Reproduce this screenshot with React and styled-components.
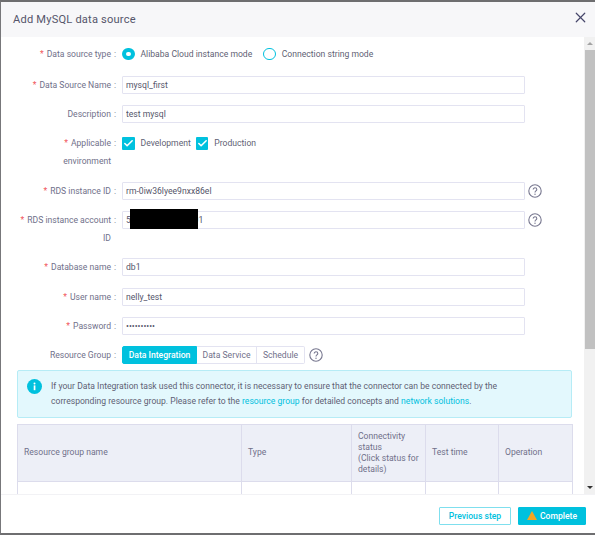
import React from "react";
import styled, { createGlobalStyle } from "styled-components";
import { Check, X } from "lucide-react";

const GlobalStyle = createGlobalStyle`
  html, body {
    margin: 0;
    padding: 0;
    background: #fff;
  }
  * {
    box-sizing: border-box;
  }
`;

const Dialog = styled.div`
  width: 595px;
  height: 535px;
  display: flex;
  flex-direction: column;
  overflow: hidden;
  background: #fff;
  border-top: 2px solid #6e6e70;
  border-bottom: 2px solid #6e6e70;
  border-left: 1px solid #77777a;
  font-family: Roboto, "Liberation Sans", sans-serif;
  font-size: 8.6px;
  color: #5f5f74;
`;

const Header = styled.header`
  height: 35px;
  flex: none;
  display: flex;
  align-items: center;
  justify-content: space-between;
  padding: 0 6px 0 12px;
  background: #f7f7f9;
`;

const Title = styled.h2`
  margin: 0;
  font-size: 11.1px;
  font-weight: 400;
  letter-spacing: 0.2px;
  color: #55556a;
`;

const CloseButton = styled.button`
  display: flex;
  padding: 0;
  border: 0;
  background: none;
  color: #46466a;
  margin-top: -4px;
`;

const Middle = styled.div`
  flex: 1;
  min-height: 0;
  display: flex;
`;

const Content = styled.div`
  flex: 1;
  min-width: 0;
  overflow: hidden;
  padding: 8px 12px 0 16px;
`;

const Scrollbar = styled.div`
  width: 11px;
  flex: none;
  display: flex;
  flex-direction: column;
  align-items: center;
  background: #f1f1f1;
`;

const ScrollArrow = styled.span`
  height: 13px;
  flex: none;
  display: flex;
  align-items: center;
  justify-content: center;
  &::before {
    content: "";
    border-left: 3px solid transparent;
    border-right: 3px solid transparent;
    ${(p) => (p.$down ? "border-top: 3px solid #333;" : "border-bottom: 3px solid #a3a3a3;")}
  }
`;

const ScrollTrack = styled.div`
  flex: 1;
  width: 100%;
`;

const ScrollThumb = styled.div`
  width: 10px;
  height: 299px;
  background: #c1c1c1;
`;

const Form = styled.div`
  display: flex;
  flex-direction: column;
  gap: 11.33px;
`;

const Row = styled.div`
  display: flex;
  align-items: flex-start;
  line-height: 18px;
  margin-bottom: ${(p) => (p.$spaced ? 1.5 : 0)}px;
`;

const Label = styled.div`
  width: 100px;
  flex: none;
  display: flex;
  justify-content: flex-end;
  text-align: right;
  color: #70708a;
`;

const LabelText = styled.span`
  width: 92px;
`;

const Colon = styled.span`
  width: 6px;
  flex: none;
  padding-left: 3px;
  text-align: left;
`;

const Star = styled.span`
  color: #f1575c;
  margin-right: 3px;
`;

const Control = styled.div`
  position: relative;
  margin-left: 5px;
  width: 403px;
  flex: none;
  display: flex;
  align-items: center;
  height: 18px;
`;

const Input = styled.input`
  width: 100%;
  height: 100%;
  padding: 0 3px;
  border: 1px solid #e3e3f1;
  border-radius: 1px;
  background: #fff;
  outline: none;
  font: inherit;
  color: #55556a;
`;

const Redaction = styled.div`
  position: absolute;
  left: 8px;
  top: -2px;
  width: 68px;
  height: 20px;
  background: #000;
`;

const Radio = styled.span`
  width: 12.5px;
  height: 12.5px;
  flex: none;
  border-radius: 50%;
  border: ${(p) => (p.$checked ? "4px solid #00c1de" : "1px solid #00c1de")};
  background: #fff;
`;

const Option = styled.span`
  margin-left: 6px;
  margin-right: ${(p) => p.$gap || 0}px;
  white-space: nowrap;
`;

const Checkbox = styled.span`
  width: 12.5px;
  height: 12.5px;
  flex: none;
  display: flex;
  align-items: center;
  justify-content: center;
  border-radius: 1px;
  background: #00c1de;
  color: #fff;
`;

const Tabs = styled.div`
  display: flex;
  height: 18px;
`;

const Tab = styled.span`
  width: ${(p) => p.$width}px;
  display: flex;
  align-items: center;
  justify-content: center;
  border: 1px solid #e3e3f1;
  border-left-width: ${(p) => (p.$first ? 1 : 0)}px;
  border-radius: ${(p) => (p.$first ? "2px 0 0 2px" : p.$last ? "0 2px 2px 0" : "0")};
  background: ${(p) => (p.$active ? "#00c1de" : "#fff")};
  border-color: ${(p) => (p.$active ? "#00c1de" : "#e3e3f1")};
  color: ${(p) => (p.$active ? "#fff" : "#70708a")};
  font-weight: ${(p) => (p.$active ? 500 : 400)};
`;

const HelpIcon = styled.svg`
  position: absolute;
  left: ${(p) => p.$left}px;
  top: 2px;
  width: 14px;
  height: 14px;
`;

const Alert = styled.div`
  display: flex;
  height: 48px;
  margin-top: 5.5px;
  padding: 8px 50px 0 9px;
  background: #e3f8fd;
  border: 1px solid #b6ecf6;
  border-radius: 2px;
  line-height: 15px;
  color: #5f5f74;
`;

const InfoIcon = styled.svg`
  width: 15px;
  height: 15px;
  flex: none;
  margin-right: 9px;
`;

const AlertLink = styled.a`
  color: #00c1de;
`;

const Table = styled.table`
  width: 555px;
  margin-top: 6px;
  border-collapse: collapse;
  table-layout: fixed;
  color: #70708a;
`;

const Th = styled.th`
  width: ${(p) => p.$width}px;
  height: 57px;
  padding: 0 6px;
  background: #edeff7;
  border: 1px solid #dcdcec;
  font-weight: 400;
  text-align: left;
  line-height: 11px;
`;

const Td = styled.td`
  height: 30px;
  border: 1px solid #dcdcec;
`;

const Footer = styled.footer`
  height: 39px;
  flex: none;
  display: flex;
  justify-content: flex-end;
  align-items: center;
  gap: 7px;
  padding: 3px 9px 0 0;
  border-top: 1px solid #f2f2f5;
`;

const Button = styled.button`
  height: 18px;
  width: ${(p) => p.$width}px;
  display: flex;
  align-items: center;
  justify-content: center;
  gap: 3px;
  padding: 0;
  border: 1px solid ${(p) => (p.$primary ? "#00c1de" : "#7fdfee")};
  border-radius: 1px;
  background: ${(p) => (p.$primary ? "#00c1de" : "#fff")};
  color: ${(p) => (p.$primary ? "#fff" : "#00c1de")};
  font: inherit;
  font-weight: 500;
`;

const Help = ({ left }) => (
  <HelpIcon $left={left} viewBox="0 0 14 14" fill="none">
    <circle cx="7" cy="7" r="6.2" stroke="#77778f" strokeWidth="1.1" />
    <path
      d="M5.2 5.6c0-1.1.8-1.8 1.8-1.8s1.8.7 1.8 1.7c0 1.4-1.8 1.5-1.8 3"
      stroke="#77778f"
      strokeWidth="1.1"
    />
    <circle cx="7" cy="10.3" r=".7" fill="#77778f" />
  </HelpIcon>
);

const FormRow = ({ label, required, spaced, children }) => (
  <Row $spaced={spaced}>
    <Label>
      <LabelText>
        {required && <Star>*</Star>}
        {label}
      </LabelText>
      <Colon>:</Colon>
    </Label>
    <Control>{children}</Control>
  </Row>
);

const columns = [
  { key: "name", title: "Resource group name", width: 224 },
  { key: "type", title: "Type", width: 110 },
  {
    key: "status",
    title: (
      <>
        Connectivity
        <br />
        status
        <br />
        (Click status for details)
      </>
    ),
    width: 74,
  },
  { key: "time", title: "Test time", width: 73 },
  { key: "operation", title: "Operation", width: 74 },
];

export default function App() {
  return (
    <>
      <GlobalStyle />
      <Dialog>
        <Header>
          <Title>Add MySQL data source</Title>
          <CloseButton>
            <X size={17} strokeWidth={1.7} />
          </CloseButton>
        </Header>
        <Middle>
          <Content>
            <Form>
              <FormRow label="Data source type" required spaced>
                <Radio $checked />
                <Option $gap={11}>Alibaba Cloud instance mode</Option>
                <Radio />
                <Option>Connection string mode</Option>
              </FormRow>
              <FormRow label="Data Source Name" required>
                <Input readOnly value="mysql_first" />
              </FormRow>
              <FormRow label="Description">
                <Input readOnly value="test mysql" />
              </FormRow>
              <FormRow label="Applicable environment" required>
                <Checkbox>
                  <Check size={11} strokeWidth={3.4} />
                </Checkbox>
                <Option $gap={5}>Development</Option>
                <Checkbox>
                  <Check size={11} strokeWidth={3.4} />
                </Checkbox>
                <Option>Production</Option>
              </FormRow>
              <FormRow label="RDS instance ID" required>
                <Input readOnly value="rm-0iw36lyee9nxx86el" />
                <Help left={406} />
              </FormRow>
              <FormRow label="RDS instance account ID" required>
                <Input readOnly value="5000000000000001" />
                <Redaction />
                <Help left={406} />
              </FormRow>
              <FormRow label="Database name" required>
                <Input readOnly value="db1" />
              </FormRow>
              <FormRow label="User name" required>
                <Input readOnly value="nelly_test" />
              </FormRow>
              <FormRow label="Password" required>
                <Input readOnly type="password" value="1234567890" />
              </FormRow>
              <FormRow label="Resource Group">
                <Tabs>
                  <Tab $first $active $width={75}>Data Integration</Tab>
                  <Tab $width={60}>Data Service</Tab>
                  <Tab $last $width={48}>Schedule</Tab>
                </Tabs>
                <Help left={187} />
              </FormRow>
            </Form>
            <Alert>
              <InfoIcon viewBox="0 0 15 15">
                <circle cx="7.5" cy="7.5" r="7.5" fill="#00c1de" />
                <rect x="6.7" y="6.4" width="1.7" height="4.8" fill="#fff" />
                <circle cx="7.5" cy="4.4" r="1" fill="#fff" />
              </InfoIcon>
              <div>
                If your Data Integration task used this connector, it is necessary to ensure that the connector can be connected by the corresponding resource group. Please refer to the{" "}
                <AlertLink>resource group</AlertLink> for detailed concepts and{" "}
                <AlertLink>network solutions</AlertLink>.
              </div>
            </Alert>
            <Table>
              <thead>
                <tr>
                  {columns.map((c) => (
                    <Th key={c.key} $width={c.width}>{c.title}</Th>
                  ))}
                </tr>
              </thead>
              <tbody>
                <tr>
                  {columns.map((c) => (
                    <Td key={c.key} />
                  ))}
                </tr>
              </tbody>
            </Table>
          </Content>
          <Scrollbar>
            <ScrollArrow />
            <ScrollThumb />
            <ScrollTrack />
            <ScrollArrow $down />
          </Scrollbar>
        </Middle>
        <Footer>
          <Button $width={72}>Previous step</Button>
          <Button $primary $width={68}>
            <svg width="10" height="9" viewBox="0 0 10 9">
              <path d="M5 0 10 9H0Z" fill="#f5a623" />
            </svg>
            Complete
          </Button>
        </Footer>
      </Dialog>
    </>
  );
}
